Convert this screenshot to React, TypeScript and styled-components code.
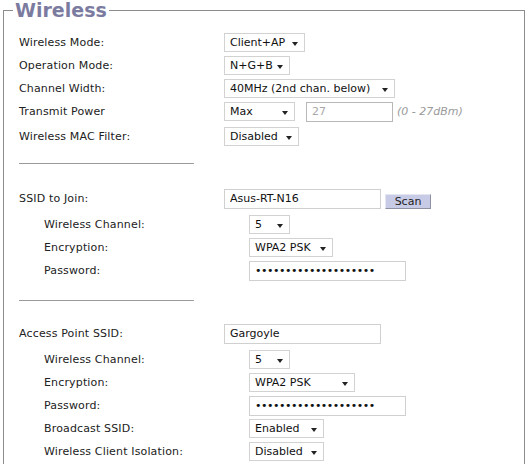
import styled, { createGlobalStyle } from "styled-components";

const GlobalStyle = createGlobalStyle`
  html, body {
    margin: 0;
    padding: 0;
    background: #ffffff;
  }
  body {
    font-family: "DejaVu Sans", Verdana, sans-serif;
    font-size: 11px;
    color: #222222;
  }
`;

type Option = { value: string; width: number };

function Select({ value, width }: Option) {
  return (
    <SelectBox style={{ width }}>
      <span>{value}</span>
      <Arrow aria-hidden="true" />
    </SelectBox>
  );
}

export default function App() {
  return (
    <>
      <GlobalStyle />
      <Panel>
        <Legend>Wireless</Legend>

        <Section>
          <Row>
            <Label>Wireless Mode:</Label>
            <Select value="Client+AP" width={81} />
          </Row>
          <Row>
            <Label>Operation Mode:</Label>
            <Select value="N+G+B" width={66} />
          </Row>
          <Row>
            <Label>Channel Width:</Label>
            <Select value="40MHz (2nd chan. below)" width={171} />
          </Row>
          <Row>
            <Label>Transmit Power</Label>
            <Controls>
              <Select value="Max" width={71} />
              <TextInput value="27" disabled readOnly $width={87} />
              <Hint>(0 - 27dBm)</Hint>
            </Controls>
          </Row>
          <Row $offset={2}>
            <Label>Wireless MAC Filter:</Label>
            <Select value="Disabled" width={75} />
          </Row>
        </Section>

        <Divider />

        <Section $top={25}>
          <Row $after={3}>
            <Label>SSID to Join:</Label>
            <Controls>
              <TextInput value="Asus-RT-N16" readOnly $width={157} />
              <ScanButton type="button">Scan</ScanButton>
            </Controls>
          </Row>
          <Row>
            <Label $indent>Wireless Channel:</Label>
            <Select value="5" width={41} />
          </Row>
          <Row>
            <Label $indent>Encryption:</Label>
            <Select value="WPA2 PSK" width={84} />
          </Row>
          <Row>
            <Label $indent>Password:</Label>
            <PasswordInput type="password" value="abcdefghijklmnopqrst" readOnly $width={157} />
          </Row>
        </Section>

        <Divider $top={20} />

        <Section $top={23}>
          <Row $after={3}>
            <Label>Access Point SSID:</Label>
            <TextInput value="Gargoyle" readOnly $width={157} />
          </Row>
          <Row>
            <Label $indent>Wireless Channel:</Label>
            <Select value="5" width={41} />
          </Row>
          <Row>
            <Label $indent>Encryption:</Label>
            <Select value="WPA2 PSK" width={106} />
          </Row>
          <Row>
            <Label $indent>Password:</Label>
            <PasswordInput type="password" value="abcdefghijklmnopqrst" readOnly $width={157} />
          </Row>
          <Row>
            <Label $indent>Broadcast SSID:</Label>
            <Select value="Enabled" width={75} />
          </Row>
          <Row>
            <Label $indent>Wireless Client Isolation:</Label>
            <Select value="Disabled" width={75} />
          </Row>
        </Section>
      </Panel>
    </>
  );
}

const Panel = styled.fieldset`
  box-sizing: border-box;
  width: 522px;
  min-height: 520px;
  margin: 0 0 0 3px;
  padding: 13px 0 0 15px;
  border: 1px solid #8c8c8c;
  border-bottom: none;
`;

const Legend = styled.legend`
  margin-left: -6px;
  padding: 0 2px 0 2px;
  font-family: "DejaVu Sans", Verdana, sans-serif;
  font-size: 19px;
  line-height: 20px;
  font-weight: bold;
  color: #7b7ba0;
`;

const Section = styled.div<{ $top?: number }>`
  display: flex;
  flex-direction: column;
  gap: 4px;
  margin-top: ${({ $top }) => $top ?? 0}px;
`;

const Row = styled.div<{ $offset?: number; $after?: number }>`
  display: flex;
  align-items: center;
  height: 19px;
  margin-top: ${({ $offset }) => $offset ?? 0}px;
  margin-bottom: ${({ $after }) => $after ?? 0}px;
`;

const Label = styled.div<{ $indent?: boolean }>`
  box-sizing: border-box;
  flex: none;
  width: ${({ $indent }) => ($indent ? 230 : 205)}px;
  padding-left: ${({ $indent }) => ($indent ? 25 : 0)}px;
  color: #222222;
  letter-spacing: 0.15px;
  white-space: nowrap;
`;

const Controls = styled.div`
  display: flex;
  align-items: center;
  gap: 11px;
  height: 100%;
`;

const SelectBox = styled.div`
  box-sizing: border-box;
  display: flex;
  align-items: center;
  justify-content: space-between;
  height: 19px;
  padding: 0 6px 0 5px;
  background: #ffffff;
  border: 1px solid #d2d2d2;
  color: #111111;
  white-space: nowrap;
`;

const Arrow = styled.span`
  flex: none;
  width: 0;
  height: 0;
  margin: 2px 0 0 4px;
  border-left: 3.5px solid transparent;
  border-right: 3.5px solid transparent;
  border-top: 4px solid #222222;
`;

const TextInput = styled.input<{ $width: number }>`
  box-sizing: border-box;
  width: ${({ $width }) => $width}px;
  height: 20px;
  margin: 0;
  padding: 0 5px;
  font-family: "DejaVu Sans", Verdana, sans-serif;
  font-size: 11px;
  color: #111111;
  background: #ffffff;
  border: 1px solid #d0d0d0;
  outline: none;

  &:disabled {
    color: #a8a8a8;
    border-color: #b8b8b8;
  }
`;

const PasswordInput = styled(TextInput)`
  letter-spacing: -0.5px;
`;

const Hint = styled.span`
  margin-left: -7px;
  font-style: italic;
  color: #9a9a9a;
`;

const ScanButton = styled.button`
  box-sizing: border-box;
  align-self: flex-end;
  width: 46px;
  height: 15px;
  margin: 0 0 -1px -7px;
  padding: 0;
  font-family: "DejaVu Sans", Verdana, sans-serif;
  font-size: 11px;
  line-height: 13px;
  color: #222222;
  background: #c8cbe6;
  border: 1px solid;
  border-color: #e4e6f2 #8e90a4 #8e90a4 #e4e6f2;
  border-radius: 0;
`;

const Divider = styled.hr<{ $top?: number }>`
  width: 175px;
  height: 1px;
  margin: ${({ $top }) => $top ?? 17}px 0 0 0;
  border: none;
  background: #9a9a9a;
`;
